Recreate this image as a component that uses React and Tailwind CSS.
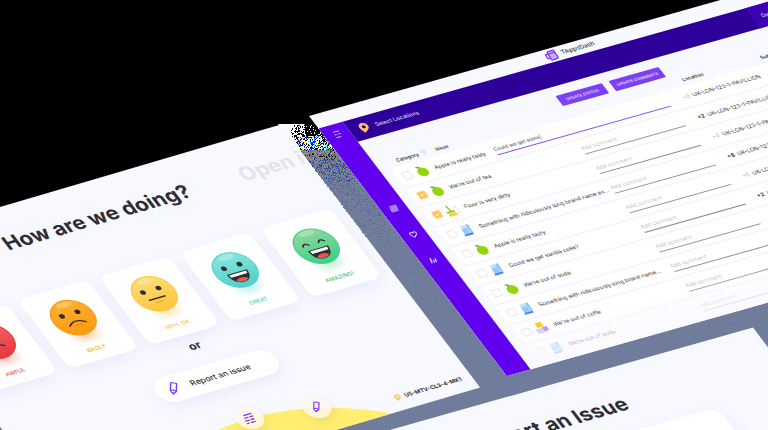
import React from "react";

const moods = [
  { label: "AWFUL", tone: "text-[#ef4a50]", mood: "awful", from: "#f4676b", to: "#e8383f", glow: "#f8b9a8" },
  { label: "BADLY", tone: "text-[#fca821]", mood: "badly", from: "#ffb02e", to: "#fb9a14", glow: "#fcc98a" },
  { label: "MEH, OK", tone: "text-[#fcbf3f]", mood: "meh", from: "#ffdd7a", to: "#fdc63a", glow: "#fde0a0" },
  { label: "GREAT", tone: "text-[#3fcfc4]", mood: "great", from: "#86e6df", to: "#52cfca", glow: "#b3ece8" },
  { label: "AMAZING!", tone: "text-[#3cbf74]", mood: "amazing", from: "#8fd9a0", to: "#3fcf86", glow: "#b5edcd" },
];

const rows = [
  { issue: "Apple is really tasty", icon: "lime", count: "+0", draft: "Could we get some|" },
  { issue: "We're out of tea", icon: "lime", count: "+2", checked: true },
  { issue: "Floor is very dirty", icon: "broom", count: "+0", checked: true },
  { issue: "Something with ridiculously long brand name ex...", icon: "cup", count: "+8" },
  { issue: "Apple is really tasty", icon: "lime", count: "+0" },
  { issue: "Could we get vanilla coke?", icon: "cup", count: "+2" },
  { issue: "We're out of soda", icon: "lime", count: "+0" },
  { issue: "Something with ridiculously long brand name...", icon: "cup", count: "+0" },
  { issue: "We're out of coffe", icon: "coffee", count: "+0" },
  { issue: "We're out of soda", icon: "cup", count: "+0" },
];

function Face({ mood, from, to, glow }) {
  const dark = "#2d2d2d";
  return (
    <svg viewBox="0 0 80 80" className="block h-20 w-20 overflow-visible" aria-hidden="true">
      <defs>
        <linearGradient id={"g-" + mood} x1="0" y1="0" x2="0" y2="1">
          <stop offset="0" stopColor={from} />
          <stop offset="1" stopColor={to} />
        </linearGradient>
        <radialGradient id={"s-" + mood}>
          <stop offset="0" stopColor={glow} stopOpacity="0.8" />
          <stop offset="1" stopColor={glow} stopOpacity="0" />
        </radialGradient>
      </defs>
      <ellipse cx="42" cy="80" rx="34" ry="22" fill={"url(#s-" + mood + ")"} />
      <circle cx="40" cy="40" r="40" fill={to} />
      <circle cx="40" cy="40" r="38" fill={"url(#g-" + mood + ")"} />
      <ellipse cx="40" cy="10" rx="15" ry="6" fill="#fff" opacity="0.25" />
      {mood === "amazing" ? (
        <g fill="none" stroke={dark} strokeWidth="3" strokeLinecap="round">
          <path d="M17 34q6-8 12 0M48 34q6-8 12 0" />
        </g>
      ) : (
        <g fill={dark}>
          <circle cx="23" cy="31" r="5" />
          <circle cx="54" cy="31" r="5" />
        </g>
      )}
      {mood === "awful" && (
        <path d="M16 21l14 6M62 21l-14 6M25 55q15-11 30 0" fill="none" stroke={dark} strokeWidth="3" strokeLinecap="round" />
      )}
      {mood === "badly" && (
        <g fill="none" strokeLinecap="round">
          <path d="M24 55q15-14 32 0" stroke={dark} strokeWidth="3" />
          <path d="M33 58q7-5 14 0" stroke="#ef7d08" strokeWidth="2" />
        </g>
      )}
      {mood === "meh" && (
        <g fill="none" strokeLinecap="round">
          <path d="M24 50h31" stroke={dark} strokeWidth="3" />
          <path d="M33 58h14" stroke="#f6ae21" strokeWidth="3" />
        </g>
      )}
      {(mood === "great" || mood === "amazing") && (
        <g>
          <path d="M20 45h40q-1 23-20 23T20 45z" fill={dark} />
          <path d="M23 47h34l-1 6H24z" fill="#fff" />
          <path d="M28 62q12-9 24 0q-4 5-12 5t-12-5z" fill="#ef5350" />
        </g>
      )}
    </svg>
  );
}

function Pencil({ className }) {
  return (
    <svg viewBox="0 0 28 28" className={className} fill="none" stroke="#7f36f2" strokeWidth="2.4" strokeLinejoin="round" aria-hidden="true">
      <path transform="rotate(34 14 14)" d="M9 1h10v19l-5 7-5-7zM9 20l5-3 5 3M12 24h4" />
    </svg>
  );
}

function Pin({ className }) {
  return (
    <svg viewBox="0 0 24 24" className={className} aria-hidden="true">
      <path transform="rotate(18 12 12)" d="M12 1c-5 0-8.500 3.600-8.500 8.300C3.500 15 12 23 12 23s8.500-8 8.500-13.700C20.500 4.600 17 1 12 1zm0 5a3.500 3.500 0 1 1 0 7 3.500 3.500 0 0 1 0-7z" fill="#ffc65c" fillRule="evenodd" />
    </svg>
  );
}

function IssueIcon({ kind }) {
  return (
    <svg viewBox="0 0 26 26" className="h-[26px] w-[26px]" aria-hidden="true">
      {kind === "lime" && (
        <g>
          <circle cx="14" cy="15" r="10" fill="#92d60a" />
          <path d="M13 6L11 2" stroke="#4c9a1c" strokeWidth="2" />
          <path d="M12 5Q7 6 6 1q6 0 6 4z" fill="#5fb01c" />
        </g>
      )}
      {kind === "cup" && (
        <g>
          <path d="M6 2h15l-1 23H3z" fill="#bfe0fc" />
          <path d="M6 9h11l-1 11H5z" fill="#93c8fb" />
          <path d="M4 21h16v4H3z" fill="#4583f6" />
          <path d="M18 2h4l-1 20h-2z" fill="#83bcf8" />
        </g>
      )}
      {kind === "broom" && (
        <g>
          <path d="M8 0l3 15M2 15h15" stroke="#7cc81a" strokeWidth="3" fill="none" />
          <path d="M3 17h14l2 8H2z" fill="#ffcf4a" />
          <path d="M22 6v3M25 12v3M23 19v3" stroke="#b9c6e8" strokeWidth="2" />
        </g>
      )}
      {kind === "coffee" && (
        <g>
          <path d="M8 0h11v11H7z" fill="#ffc91f" />
          <path d="M2 13h18v11H1z" fill="#dcc6fb" />
          <path d="M15 12h9v9h-9z" fill="#b48cf0" />
        </g>
      )}
    </svg>
  );
}

/* Slate floor below the windows and the black void above them. */
function Backdrop() {
  return (
    <svg viewBox="0 0 768 430" preserveAspectRatio="xMidYMid slice" className="absolute inset-0 h-full w-full" aria-hidden="true">
      <defs>
        <filter id="grain" x="0" y="0" width="100%" height="100%">
          <feTurbulence type="fractalNoise" baseFrequency="0.7" numOctaves="2" seed="4" />
          <feColorMatrix type="saturate" values="0.5" />
        </filter>
      </defs>
      <rect width="768" height="430" fill="#697799" />
      <rect width="768" height="430" filter="url(#grain)" opacity="0.16" />
      <path d="M0 0H768V40L345 126L326 142L300 142L0 250Z" fill="#000" />
      <path d="M278 124H304L330 148L304 156Z" fill="#fbfbff" />
    </svg>
  );
}

/* Scattered pixels in the wedge where the two upper windows meet. */
function makeStatic() {
  let s = 12345;
  const rnd = () => {
    s = (s * 16807) % 2147483647;
    return s / 2147483647;
  };
  const pick = (list) => list[Math.floor(rnd() * list.length)];
  const out = [];
  for (let y = 125; y < 250; y++) {
    const left = y < 155 ? 290 + Math.abs(y - 132) * 0.6 : 304 + (y - 155) * 0.757;
    const right = 310 + (y - 116) * 0.76;
    for (let x = Math.round(left); x < right; x++) {
      const r = rnd();
      let fill = null;
      if (y < 136) fill = x > 304 ? (r < 0.12 ? "#fff" : "#000") : r < 0.45 ? "#000" : null;
      else if (y < 150) fill = r < 0.26 ? "#000" : r < 0.48 ? "#fff" : r < 0.8 ? pick(["#00e5ff", "#0018f0", "#1230ff", "#29c8f5", "#f2e600", "#0a0a90"]) : null;
      else if (y < 160) fill = r < 0.7 ? "#808080" : r < 0.82 ? "#2a2f8c" : r < 0.88 ? "#111" : "#969aa0";
      else if (r < 0.95 - (y - 160) / 100) fill = y < 182 ? pick(["#3f46a0", "#7f8a90", "#55979a", "#8878a0", "#343890", "#74808c", "#6b7480"]) : pick(["#5b679a", "#7a8590", "#628a98", "#7c78a0", "#596890", "#74808c"]);
      if (fill) out.push({ x, y, fill });
    }
  }
  return out;
}
const specks = makeStatic();

function Static() {
  return (
    <svg viewBox="0 0 768 430" preserveAspectRatio="xMidYMid slice" shapeRendering="crispEdges" className="pointer-events-none absolute inset-0 h-full w-full" aria-hidden="true">
      {specks.map((p) => (
        <rect key={p.x + "-" + p.y} x={p.x} y={p.y} width="1" height="1" fill={p.fill} />
      ))}
    </svg>
  );
}

function Feedback() {
  return (
    <section className="absolute left-[-136px] top-[247px] h-[628px] w-[834px] origin-top-left overflow-hidden bg-[#f8f9ff] pt-[52px] text-[#2d2e33] [transform:matrix(0.5,-0.147,0.317,0.419,0,0)]">
      <div className="grid grid-cols-[1fr_auto_1fr] whitespace-nowrap text-[40px] font-bold leading-[48px]">
        <span />
        <h1>How are we doing?</h1>
        <span className="min-w-0 pl-[102px] text-[#e3e4ea]">Open i</span>
      </div>
      <div className="mt-[92px] flex justify-center gap-[22px]">
        {moods.map((m) => (
          <button key={m.label} type="button" className="flex h-[164px] w-[140px] shrink-0 flex-col items-center rounded-2xl bg-white pt-[26px] shadow-[0_12px_30px_rgba(98,60,234,0.08)]">
            <Face mood={m.mood} from={m.from} to={m.to} glow={m.glow} />
            <span className={"relative mt-[25px] text-[11px] font-medium leading-4 " + m.tone}>{m.label}</span>
          </button>
        ))}
      </div>
      <p className="mt-3 pl-1 text-center text-[22px] font-bold leading-7">or</p>
      <button type="button" className="relative z-10 mx-auto mt-[30px] flex h-14 w-60 items-center gap-5 rounded-full bg-white pl-5 text-base font-medium shadow-[0_12px_30px_rgba(98,60,234,0.08)]">
        <Pencil className="h-7 w-7" />
        Report an issue
      </button>
      <div className="absolute left-[-24px] top-[556px] h-[880px] w-[880px] rounded-full bg-[#ffee70]" />
      <button type="button" aria-label="List" className="absolute left-[394px] top-[530px] flex h-[50px] w-[50px] items-center justify-center rounded-full bg-[#fcf8ee]/80 shadow-[0_8px_16px_rgba(150,110,60,0.15)]">
        <svg viewBox="0 0 24 24" className="h-6 w-6" fill="none" stroke="#7f36f2" strokeWidth="2.600" aria-hidden="true">
          <path d="M5 4h16M3 10h8M13 10h8M1 16h9M12 16h7M1 22h5M9 22h9" />
        </svg>
      </button>
      <button type="button" aria-label="Report" className="absolute left-[517px] top-[547px] flex h-[50px] w-[50px] items-center justify-center rounded-full bg-[#fcf8ee]/80 shadow-[0_8px_16px_rgba(150,110,60,0.15)]">
        <Pencil className="h-6 w-6" />
      </button>
      <p className="absolute bottom-5 right-5 flex items-center gap-1.5 text-[11px] font-bold leading-4">
        <Pin className="h-4 w-4" />
        US-MTV-CL3-4-MK1
      </p>
    </section>
  );
}

function Dashboard() {
  return (
    <section className="absolute left-[309px] top-[116px] flex h-[624px] w-[1020px] origin-top-left flex-col overflow-hidden bg-[#f8f9ff] text-[#3b3b42] [transform:matrix(0.5,-0.141,0.317,0.417,0,0)]">
      <header className="flex h-[30px] shrink-0 items-center justify-center gap-2 pl-1 text-xs font-medium">
        <svg viewBox="0 0 24 24" className="h-6 w-6" fill="none" stroke="#7f36f2" strokeWidth="2.500" strokeLinejoin="round" aria-hidden="true">
          <path d="M10 3h12l-1 16-3 3H7l1-15z" fill="#c9a9ff" />
          <path d="M8 8H3l-1 9h5M9 8h13" />
        </svg>
        TAppsDash
      </header>
      <div className="flex flex-1">
        <nav className="flex w-12 flex-col items-center bg-[#6000ee]">
          <button type="button" aria-label="Menu" className="mt-3.5 h-4 w-4">
            <svg viewBox="0 0 20 20" fill="none" stroke="#d9c4ff" strokeWidth="2.500"><path d="M4 2h14M3 10h5M11 10h7M2 18h12" /></svg>
          </button>
          <a href="#table" aria-label="Table" className="mt-[162px] h-4 w-4">
            <svg viewBox="0 0 20 20" fill="#9a60f5" stroke="#b98cfa" strokeWidth="2"><path d="M4 2h16l-4 16H0zM3 7h16M1 13h16M9 2L5 18M15 2l-4 16" /></svg>
          </a>
          <a href="#saved" aria-label="Saved" className="mt-[46px] h-4 w-4">
            <svg viewBox="0 0 20 20" fill="none" stroke="#d9c4ff" strokeWidth="2.500"><path d="M8 18L3 10C0 5 7 1 10 6c6-5 11 1 6 6z" /></svg>
          </a>
          <a href="#stats" aria-label="Statistics" className="mt-[46px] h-4 w-4">
            <svg viewBox="0 0 20 20" fill="none" stroke="#d9c4ff" strokeWidth="3"><path d="M7 2L3 17M11 9l-2 8M17 6l-3 11" /></svg>
          </a>
        </nav>
        <main className="relative flex-1">
          <div className="flex h-12 items-center bg-[#2d0099] pl-4 text-[11px] font-medium text-[#d9cfee]">
            <Pin className="mr-2.5 h-6 w-6" />
            Select Locations
            <span className="ml-auto flex h-full w-[168px] items-center bg-[#3e00b4] pl-[18px]">Date</span>
          </div>
          <div className="flex gap-[14px] pl-[383px] pt-5 text-[8px] font-bold text-[#d9c8ff]">
            <button type="button" className="h-6 w-[92px] rounded-xs bg-[#7c3ff3]">UPDATE STATUS</button>
            <button type="button" className="h-6 w-[100px] rounded-xs bg-[#7c3ff3]">UPDATE COMMENTS</button>
          </div>
          <table className="ml-5 w-[952px] table-fixed border-separate border-spacing-x-0 border-spacing-y-[3px] whitespace-nowrap text-left text-[11px]">
            <colgroup>
              <col className="w-[74px]" />
              <col className="w-[120px]" />
              <col className="w-[358px]" />
              <col className="w-[196px]" />
              <col />
            </colgroup>
            <thead>
              <tr className="h-[22px] text-[10px]">
                <th className="pl-5 font-semibold">
                  <span className="flex items-center gap-1.5">
                    Category
                    <svg viewBox="0 0 10 10" className="h-2.5 w-2.5 shrink-0" fill="none" stroke="#c5c5d0" aria-hidden="true"><path d="M1 1h8L6 5v4H4V5z" /></svg>
                  </span>
                </th>
                <th className="pl-6 font-semibold">Issue</th>
                <th aria-label="Comment" />
                <th className="pl-10 font-semibold">Location</th>
                <th className="font-semibold">Sublocation</th>
              </tr>
            </thead>
            <tbody>
              {rows.map((r, i) => (
                <tr key={i} className="h-11">
                  <td className="rounded-l-lg bg-white p-0 pl-3 shadow-[0_3px_0_#f3f2fe]">
                    <span className="flex items-center gap-2">
                      <span className="grid shrink-0 place-items-center">
                        <input
                          type="checkbox"
                          aria-label={r.issue}
                          defaultChecked={r.checked}
                          className="peer col-start-1 row-start-1 h-4 w-4 appearance-none rounded-xs border border-[#d2d2da] bg-white checked:border-[#ffc65c] checked:bg-[#ffc65c]"
                        />
                        <svg viewBox="0 0 10 10" className="pointer-events-none invisible col-start-1 row-start-1 h-2 w-2 peer-checked:visible" fill="none" stroke="#fff" strokeWidth="2" aria-hidden="true">
                          <path d="M1 5l3 3 5-6" />
                        </svg>
                      </span>
                      <IssueIcon kind={r.icon} />
                    </span>
                  </td>
                  <td className="bg-white p-0 shadow-[0_3px_0_#f3f2fe]"><span className="relative z-10">{r.issue}</span></td>
                  <td className="bg-white p-0 shadow-[0_3px_0_#f3f2fe]">
                    <input
                      type="text"
                      aria-label={"Comment on " + r.issue}
                      placeholder="Add comment"
                      defaultValue={r.draft}
                      className={
                        r.draft
                          ? "block h-[22px] w-[346px] border-b-2 border-[#8a45f5] bg-transparent pb-1 text-[10px] outline-none"
                          : "ml-[145px] block h-[22px] w-[202px] border-b-2 border-[#8d8d8d] bg-transparent pb-1 text-[11px] font-light outline-none placeholder:text-[#b5b5bd]"
                      }
                    />
                  </td>
                  <td className="bg-white p-0 pl-[18px] shadow-[0_3px_0_#f3f2fe]">
                    <span className="flex items-center">
                      <span className={r.count === "+0" ? "w-5 text-[#b9b9c1]" : "w-5 font-bold"}>{r.count}</span>
                      UK-LON-123-1-PAVILLION
                    </span>
                  </td>
                  <td className="rounded-r-lg bg-white p-0 shadow-[0_3px_0_#f3f2fe]" />
                </tr>
              ))}
            </tbody>
          </table>
          <div className="pointer-events-none absolute inset-x-0 bottom-0 z-20 h-20 bg-linear-to-b from-transparent to-[#fafaff]" />
        </main>
      </div>
    </section>
  );
}

function ReportForm() {
  return (
    <section className="absolute left-[287px] top-[459px] h-[620px] w-[932px] origin-top-left overflow-hidden bg-[#f8f9ff] pt-[54px] text-[#2d2e33] [transform:matrix(0.5,-0.141,0.317,0.417,0,0)]">
      <h2 className="pl-6 text-center text-[40px] font-bold leading-[48px]">Report an Issue</h2>
      <div className="mx-auto mt-9 h-[420px] w-[616px] rounded-3xl bg-white shadow-[0_12px_30px_rgba(98,60,234,0.08)]" />
    </section>
  );
}

export default function App() {
  return (
    <div className="relative h-screen min-h-[430px] overflow-hidden bg-black font-[Inter,'Open_Sans',sans-serif]">
      <Backdrop />
      <Feedback />
      <Static />
      <Dashboard />
      <ReportForm />
    </div>
  );
}
